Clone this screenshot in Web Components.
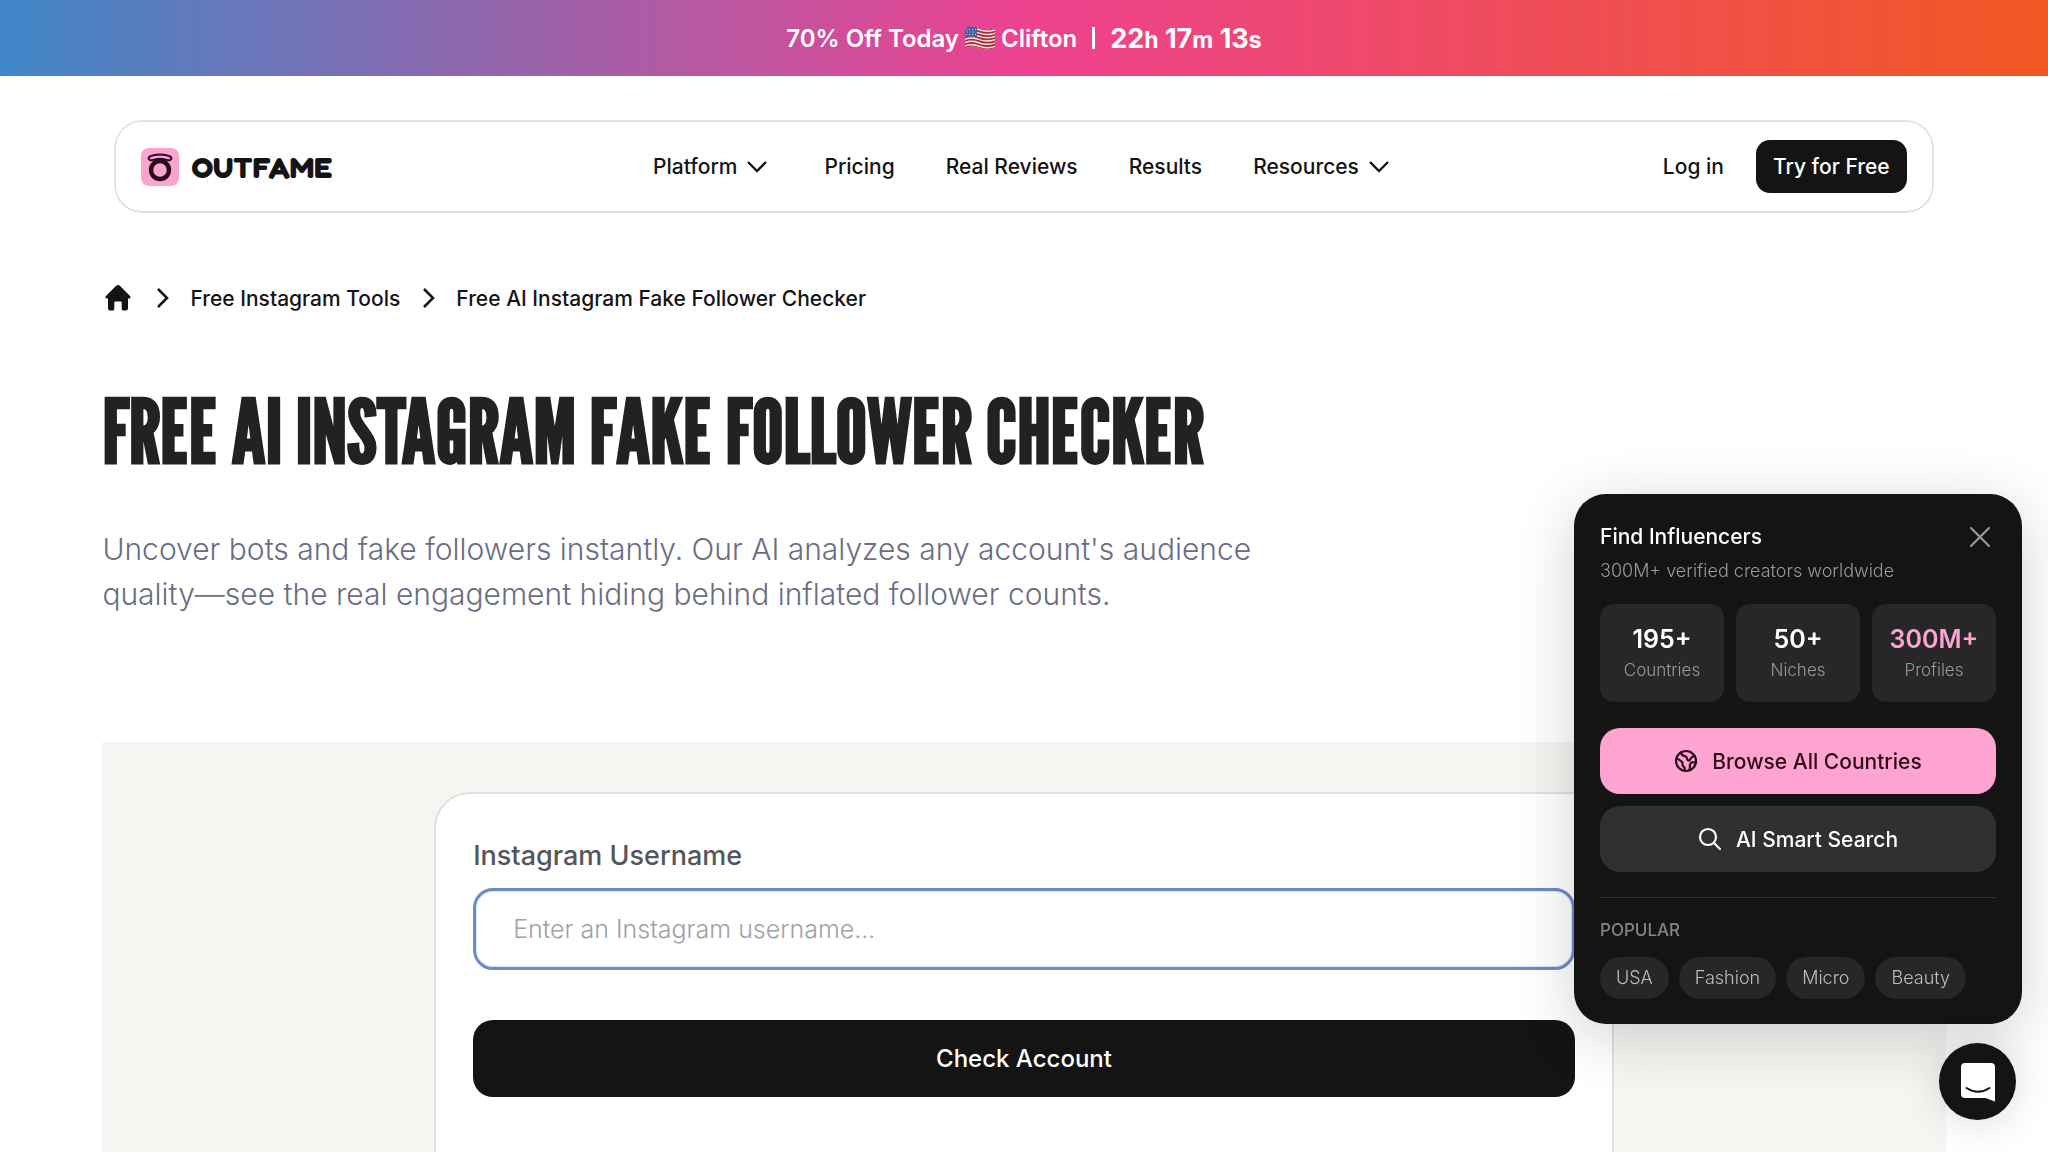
<!DOCTYPE html>
<html lang="en">
<head>
<meta charset="utf-8">
<meta name="viewport" content="width=device-width, initial-scale=1">
<title>Free AI Instagram Fake Follower Checker</title>
<style>
  body {
    margin: 0;
    background: #fff;
    color: #141414;
    font-family: Inter, "Liberation Sans", sans-serif;
    font-size: 21px;
    font-weight: 500;
  }
</style>
</head>
<body>
<outfame-page></outfame-page>

<script>
class PromoBanner extends HTMLElement {
  constructor(){
    super();
    this._root = this.attachShadow({mode: 'open'});
  }

  connectedCallback() {
    this._root.innerHTML = `
    <style>
      :host {
        display: flex;
        align-items: center;
        justify-content: center;
        height: 76px;
        background: linear-gradient(90deg, #3f87c7, #ee4290 50%, #f15722);
        color: #fff;
        font-size: 24px;
        font-weight: 600;
      }
      svg {
        width: 32px;
        height: 26px;
        margin: 0 5px;
      }
      .bar {
        width: 3px;
        height: 22px;
        margin: 0 15px;
        background: #fff;
      }
      .timer {
        font-size: 27px;
        font-weight: 700;
      }
      small {
        font-size: 23px;
      }
    </style>
    <span>70% Off Today</span>
    <svg viewBox="0 0 32 26" aria-hidden="true">
      <defs>
        <clipPath id="flag"><path d="M1 3Q8 0 15 3T31 3V23Q23 26 16 23T1 23Z"/></clipPath>
      </defs>
      <g clip-path="url(#flag)">
        <rect width="32" height="26" fill="#f6e9e6"/>
        <g fill="none" stroke="#a6303e" stroke-width="1.8">
          <path d="M0 3Q8 0 15 3T32 3"/>
          <path d="M0 6.3Q8 3.3 15 6.3T32 6.3"/>
          <path d="M0 9.6Q8 6.6 15 9.6T32 9.6"/>
          <path d="M0 12.9Q8 9.9 15 12.9T32 12.9"/>
          <path d="M0 16.2Q8 13.2 15 16.2T32 16.2"/>
          <path d="M0 19.5Q8 16.5 15 19.5T32 19.5"/>
          <path d="M0 22.8Q8 19.8 15 22.8T32 22.8"/>
        </g>
        <path d="M0 0H13V13Q7 10 0 13Z" fill="#4a5f9c"/>
        <g stroke="#c9d2ea" stroke-width="1" stroke-dasharray="1 2">
          <path d="M2 4.5H12M3 7H12M2 9.5H12"/>
        </g>
      </g>
    </svg>
    <span>Clifton</span>
    <span class="bar"></span>
    <span class="timer">22<small>h</small> 17<small>m</small> 13<small>s</small></span>`;
  }
}

class NavItem extends HTMLElement {
  constructor(){
    super();
    this._root = this.attachShadow({mode: 'open'});
  }

  connectedCallback() {
    const chevron = this.hasAttribute('menu') ? `
      <svg viewBox="0 0 24 24" aria-hidden="true"><path d="M3 7l9 9 9-9"/></svg>` : '';
    this._root.innerHTML = `
    <style>
      :host {
        display: block;
      }
      a {
        display: flex;
        align-items: center;
        gap: 8px;
        color: inherit;
        text-decoration: none;
        white-space: nowrap;
      }
      svg {
        width: 24px;
        height: 24px;
        margin-right: 4px;
        fill: none;
        stroke: currentColor;
        stroke-width: 2.4;
      }
    </style>
    <a href="#"><slot></slot>${chevron}</a>`;
  }
}

class SiteHeader extends HTMLElement {
  constructor(){
    super();
    this._root = this.attachShadow({mode: 'open'});
  }

  connectedCallback() {
    this._root.innerHTML = `
    <style>
      :host {
        display: grid;
        grid-template-columns: 1fr auto 1fr;
        align-items: center;
        margin: 44px 12px 0;
        height: 89px;
        padding: 0 25px;
        border: 2px solid #e4e4e4;
        border-bottom-color: #dedede;
        border-radius: 28px;
      }
      a {
        color: inherit;
        text-decoration: none;
      }
      .logo {
        display: flex;
        align-items: center;
        gap: 12px;
        font-family: Fredoka, Inter, sans-serif;
        font-size: 30px;
        font-weight: 700;
      }
      .logo svg {
        width: 38px;
        height: 38px;
      }
      nav {
        display: flex;
        gap: 51px;
      }
      .account {
        display: flex;
        align-items: center;
        justify-content: flex-end;
        gap: 32px;
      }
      .cta {
        padding: 14px 17px;
        line-height: 25px;
        border-radius: 14px;
        background: #141414;
        color: #fff;
      }
    </style>
    <a class="logo" href="#">
      <svg viewBox="0 0 38 38" aria-hidden="true">
        <rect width="38" height="38" rx="8" fill="#fca4d0"/>
        <g fill="none" stroke="#2a0a1c">
          <circle cx="19" cy="22" r="9" stroke-width="4.4"/>
          <path d="M11 12.2C7.500 12.800 6.400 9.800 9.500 8.200C14 6 24 6 28.500 8.200C31.600 9.800 30.500 12.800 27 12.200C22 10.400 16 10.400 11 12.200Z" stroke-width="2"/>
        </g>
      </svg>
      <span>OUTFAME</span>
    </a>
    <nav>
      <nav-item menu>Platform</nav-item>
      <nav-item>Pricing</nav-item>
      <nav-item>Real Reviews</nav-item>
      <nav-item>Results</nav-item>
      <nav-item menu>Resources</nav-item>
    </nav>
    <div class="account">
      <a href="#">Log in</a>
      <a class="cta" href="#">Try for Free</a>
    </div>`;
  }
}

class BreadCrumbs extends HTMLElement {
  constructor(){
    super();
    this._root = this.attachShadow({mode: 'open'});
  }

  connectedCallback() {
    this._root.innerHTML = `
    <style>
      :host {
        display: block;
        margin-top: 69px;
      }
      nav {
        display: flex;
        align-items: center;
        gap: 16px;
        height: 32px;
      }
      a {
        color: inherit;
        text-decoration: none;
      }
      svg {
        display: block;
        height: 32px;
      }
      .home {
        width: 32px;
      }
      .sep {
        width: 24px;
        fill: none;
        stroke: currentColor;
        stroke-width: 2.6;
      }
    </style>
    <nav aria-label="Breadcrumb">
      <a href="#" aria-label="Home">
        <svg class="home" viewBox="0 0 32 32">
          <path d="M14.4 3.6Q16 2.2 17.6 3.6L28 14Q29.6 16.400 27 16.400H26V26.500Q26 28.400 24 28.400H21Q19.700 28.400 19.700 27V20.500Q19.700 19.500 18.700 19.500H13.300Q12.300 19.500 12.300 20.500V27Q12.300 28.400 11 28.400H8Q6 28.400 6 26.500V16.400H5Q2.400 16.400 4 14Z" fill="#141414"/>
        </svg>
      </a>
      <svg class="sep" viewBox="0 0 24 32" aria-hidden="true"><path d="M8 7l9 9-9 9"/></svg>
      <a href="#">Free Instagram Tools</a>
      <svg class="sep" viewBox="0 0 24 32" aria-hidden="true"><path d="M8 7l9 9-9 9"/></svg>
      <span>Free AI Instagram Fake Follower Checker</span>
    </nav>`;
  }
}

class CheckerForm extends HTMLElement {
  constructor(){
    super();
    this._root = this.attachShadow({mode: 'open'});
    this.username_input = null;
  }

  connectedCallback() {
    this._root.innerHTML = `
    <style>
      :host {
        display: flex;
        justify-content: center;
        padding-top: 50px;
        background: #f4f6f1;
      }
      form {
        box-sizing: border-box;
        width: 64%;
        padding: 44px 37px 56px;
        border: 2px solid #e0e1e0;
        border-bottom: 0;
        border-radius: 36px 36px 0 0;
        background: #fff;
      }
      label {
        display: block;
        margin-bottom: 14px;
        color: #55565c;
        font-size: 27px;
        line-height: 36px;
      }
      input {
        box-sizing: border-box;
        width: 100%;
        height: 82px;
        padding: 0 37px;
        border: 3px solid #6b8bc4;
        border-radius: 20px;
        box-shadow: inset 0 0 0 1px #d9e6fb;
        background: #fff;
        outline: none;
        font: inherit;
        font-size: 25px;
        font-weight: 300;
      }
      input::placeholder {
        color: #9ea1a9;
        opacity: 1;
      }
      button {
        display: block;
        width: 100%;
        height: 77px;
        margin-top: 50px;
        border: 0;
        border-radius: 20px;
        background: #141414;
        color: #fff;
        font: inherit;
        font-size: 24px;
      }
    </style>
    <form>
      <label for="username">Instagram Username</label>
      <input type="text" id="username" placeholder="Enter an Instagram username...">
      <button type="submit">Check Account</button>
    </form>`;
    this.username_input = this._root.getElementById('username');
    this._root.querySelector('form').addEventListener('submit', (event) => {
      event.preventDefault();
      this.username_input.focus();
    });
  }
}

class StatTile extends HTMLElement {
  constructor(){
    super();
    this._root = this.attachShadow({mode: 'open'});
  }

  connectedCallback() {
    this._root.innerHTML = `
    <style>
      :host {
        display: flex;
        flex-direction: column;
        align-items: center;
        padding: 19px 0 17px;
        border-radius: 14px;
        background: #272727;
      }
      b {
        color: var(--stat-color, #fff);
        font-size: 25px;
        font-weight: 600;
        line-height: 32px;
      }
      span {
        color: #999;
        font-size: 17px;
        font-weight: 350;
        line-height: 30px;
      }
    </style>
    <b>${this.getAttribute('value')}</b>
    <span><slot></slot></span>`;
  }
}

class InfluencerPanel extends HTMLElement {
  constructor(){
    super();
    this._root = this.attachShadow({mode: 'open'});
    this.close_btn = null;
  }

  connectedCallback() {
    this._root.innerHTML = `
    <style>
      :host {
        position: fixed;
        right: 26px;
        bottom: 128px;
        box-sizing: border-box;
        width: 448px;
        padding: 26px 26px 25px;
        border-radius: 32px;
        background: #141414;
        box-shadow: 0 12px 60px rgba(20, 24, 40, 0.2);
        color: #fff;
      }
      header {
        display: flex;
        align-items: center;
        justify-content: space-between;
      }
      h2 {
        margin: 0;
        font-size: 21px;
        font-weight: 500;
        line-height: 34px;
      }
      button {
        border: 0;
        padding: 0;
        background: none;
        color: inherit;
        font: inherit;
      }
      svg {
        display: block;
        width: 24px;
        height: 24px;
        fill: none;
        stroke: currentColor;
        stroke-width: 2.2;
        stroke-linecap: round;
        stroke-linejoin: round;
      }
      .close {
        padding: 5px 4px;
        color: #999;
      }
      .sub {
        margin: 0;
        color: #999;
        font-size: 18px;
        font-weight: 350;
        line-height: 33px;
      }
      .stats {
        display: grid;
        grid-template-columns: repeat(3, 1fr);
        gap: 12px;
        margin: 17px 0 26px;
      }
      .pink {
        --stat-color: #fca4d0;
      }
      .action {
        display: flex;
        align-items: center;
        justify-content: center;
        gap: 14px;
        width: 100%;
        height: 66px;
        margin-top: 12px;
        border-radius: 20px;
        background: #303030;
      }
      .action.primary {
        background: #ffa3d1;
        color: #2a0a1c;
      }
      .popular {
        margin-top: 25px;
        border-top: 1px solid #333;
        padding-top: 18px;
      }
      h3 {
        margin: 0 0 13px;
        color: #858585;
        font-size: 17px;
        font-weight: 500;
        line-height: 28px;
      }
      .chips {
        display: flex;
        gap: 10px;
      }
      .chips a {
        padding: 0 16px;
        border-radius: 21px;
        background: #272727;
        color: #bdbdbd;
        font-size: 18px;
        font-weight: 350;
        line-height: 42px;
        text-decoration: none;
      }
    </style>
    <header>
      <h2>Find Influencers</h2>
      <button class="close" aria-label="Close">
        <svg viewBox="0 0 24 24"><path d="M3 3l18 18M21 3L3 21"/></svg>
      </button>
    </header>
    <p class="sub">300M+ verified creators worldwide</p>
    <div class="stats">
      <stat-tile value="195+">Countries</stat-tile>
      <stat-tile value="50+">Niches</stat-tile>
      <stat-tile value="300M+" class="pink">Profiles</stat-tile>
    </div>
    <button class="action primary">
      <svg viewBox="0 0 24 24" aria-hidden="true">
        <circle cx="12" cy="12" r="10"/>
        <path d="M7 3.5C7.500 6 9 7 11 7.200C14 7.500 12 11 14.500 11.500C17 12 16 8 19 7.500L20.500 7M2.500 9.500C5 10 6.500 11.500 8 13C10 15 7 16 9.500 17.500C11.500 18.500 10.500 20.500 10.500 21.800M21.800 13.500C19.500 13 16.500 13 16 15.500C15.500 17.500 16.500 18.500 15.500 21"/>
      </svg>
      Browse All Countries
    </button>
    <button class="action">
      <svg viewBox="0 0 24 24" aria-hidden="true"><circle cx="10" cy="10" r="8"/><path d="M16 16l6 6"/></svg>
      AI Smart Search
    </button>
    <div class="popular">
      <h3>POPULAR</h3>
      <div class="chips">
        <a href="#">USA</a>
        <a href="#">Fashion</a>
        <a href="#">Micro</a>
        <a href="#">Beauty</a>
      </div>
    </div>`;
    this.close_btn = this._root.querySelector('.close');
    this.close_btn.addEventListener('click', (event) => {
      this.style.display = 'none';
    });
  }
}

class ChatLauncher extends HTMLElement {
  constructor(){
    super();
    this._root = this.attachShadow({mode: 'open'});
  }

  connectedCallback() {
    this._root.innerHTML = `
    <style>
      :host {
        position: fixed;
        right: 32px;
        bottom: 32px;
      }
      button {
        display: flex;
        align-items: center;
        justify-content: center;
        width: 77px;
        height: 77px;
        border: 0;
        border-radius: 50%;
        padding: 0;
        background: #141414;
        box-shadow: 0 3px 40px rgba(0, 0, 0, 0.14);
      }
      svg {
        width: 36px;
        height: 40px;
      }
    </style>
    <button aria-label="Open chat">
      <svg viewBox="0 0 36 40">
        <path d="M5 1H31Q35 1 35 5V39.5L25.5 36H5Q1 36 1 32V5Q1 1 5 1Z" fill="#fff"/>
        <path d="M6.5 26Q18 33.5 29.5 26" fill="none" stroke="#141414" stroke-width="2" stroke-linecap="round"/>
      </svg>
    </button>`;
  }
}

class OutfamePage extends HTMLElement {
  constructor(){
    super();
    this._root = this.attachShadow({mode: 'open'});
  }

  connectedCallback() {
    this._root.innerHTML = `
    <style>
      :host {
        display: flex;
        flex-direction: column;
        min-height: 100vh;
      }
      main {
        display: flex;
        flex-direction: column;
        flex: 1;
        padding: 0 5%;
      }
      h1 {
        margin: 64px 0 0;
        color: #222;
        font-family: "League Gothic", Anton, "Open Sans Condensed", sans-serif;
        font-size: 88px;
        font-weight: 700;
        line-height: 106px;
      }
      p {
        max-width: 1180px;
        margin: 43px 0 125px;
        color: #6b6e83;
        font-size: 30px;
        font-weight: 350;
        line-height: 45px;
      }
      checker-form {
        flex: 1;
      }
    </style>
    <promo-banner></promo-banner>
    <main>
      <site-header></site-header>
      <bread-crumbs></bread-crumbs>
      <h1>FREE AI INSTAGRAM FAKE FOLLOWER CHECKER</h1>
      <p>Uncover bots and fake followers instantly. Our AI analyzes any account's audience quality—see the real engagement hiding behind inflated follower counts.</p>
      <checker-form></checker-form>
    </main>
    <influencer-panel></influencer-panel>
    <chat-launcher></chat-launcher>`;
  }
}

window.customElements.define('promo-banner', PromoBanner);
window.customElements.define('nav-item', NavItem);
window.customElements.define('site-header', SiteHeader);
window.customElements.define('bread-crumbs', BreadCrumbs);
window.customElements.define('checker-form', CheckerForm);
window.customElements.define('stat-tile', StatTile);
window.customElements.define('influencer-panel', InfluencerPanel);
window.customElements.define('chat-launcher', ChatLauncher);
window.customElements.define('outfame-page', OutfamePage);
</script>
</body>
</html>
